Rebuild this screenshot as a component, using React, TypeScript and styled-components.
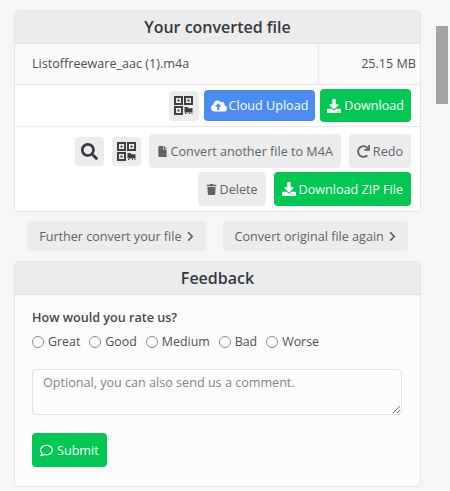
import React from 'react';
import styled, { createGlobalStyle } from 'styled-components';
import {
  FaCloudUploadAlt,
  FaDownload,
  FaSearch,
  FaFile,
  FaRedo,
  FaTrash,
  FaChevronRight,
  FaRegComment,
} from 'react-icons/fa';

const GlobalStyle = createGlobalStyle`
  html, body {
    margin: 0;
    height: 491px;
    overflow: hidden;
    background: #f6f6f6;
  }
  * {
    box-sizing: border-box;
  }
`;

const Page = styled.div`
  width: 435px;
  padding: 10px 14px 0;
  font-family: 'Open Sans', 'Noto Sans', sans-serif;
  font-size: 12.6px;
  color: #495057;
`;

const Card = styled.section`
  background: #fcfcfc;
  border: 1px solid #e4e6e6;
  border-radius: 4px;
  overflow: hidden;
`;

const CardHeader = styled.h2`
  margin: 0;
  height: 33px;
  line-height: 32px;
  text-align: center;
  font-size: 16px;
  font-weight: 600;
  color: #343a40;
  background: #ececec;
  border-bottom: 1px solid #e0e3e3;
`;

const FileRow = styled.div`
  display: grid;
  grid-template-columns: 304px 1fr;
  height: 41px;
  background: #fafafa;
  border-bottom: 1px solid #e8e8e8;
`;

const FileName = styled.div`
  padding-left: 17px;
  line-height: 40px;
  border-right: 1px solid #e8e8e8;
`;

const FileSize = styled.div`
  padding-right: 4px;
  line-height: 40px;
  text-align: right;
`;

const ActionRow = styled.div`
  display: flex;
  justify-content: flex-end;
  align-items: center;
  gap: 5px;
  height: 41px;
  padding: 0 9px 0 0;
  background: #fff;
`;

const ToolRow = styled.div`
  display: flex;
  flex-wrap: wrap;
  justify-content: flex-end;
  align-items: center;
  align-content: flex-start;
  gap: 4px 8px;
  height: 85px;
  padding: 7px 9px 0 0;
  background: #fff;
  border-top: 1px solid #e8e8e8;
`;

const Button = styled.button<{ $kind?: 'grey' | 'blue' | 'green'; $height?: number }>`
  display: inline-flex;
  align-items: center;
  justify-content: center;
  gap: ${(p) => (p.$kind === 'blue' ? 2 : 3)}px;
  height: ${(p) => p.$height ?? 34}px;
  padding: 0 7px;
  border: 0;
  border-radius: 4px;
  font: inherit;
  white-space: nowrap;
  color: ${(p) => (p.$kind === 'blue' || p.$kind === 'green' ? '#fff' : '#5f6468')};
  background: ${(p) =>
    p.$kind === 'blue' ? '#4a8cf0' : p.$kind === 'green' ? '#00c853' : '#ececec'};
`;

const ToolButton = styled(Button)`
  padding: 0 8px;
`;

const IconButton = styled(Button)<{ $size: number }>`
  width: ${(p) => p.$size}px;
  height: ${(p) => p.$size}px;
  padding: 0;
  color: #343a40;
`;

const MoreRow = styled.div`
  display: flex;
  justify-content: center;
  gap: 17px;
  margin: 9px 0 10px;
`;

const MoreButton = styled(Button)`
  height: 30px;
  padding: 0 10px 0 12px;
  gap: 3px;
  background: #ececec;
`;

const FeedbackBody = styled.form`
  height: 191px;
  padding: 13px 18px 0 17px;
`;

const Question = styled.div`
  font-weight: 600;
  line-height: 20px;
  color: #44494e;
`;

const RatingRow = styled.div`
  display: flex;
  gap: 9px;
  margin-top: 4px;
  line-height: 20px;
  font-size: 12.4px;
`;

const Rating = styled.label`
  display: inline-flex;
  align-items: center;
  gap: 4px;
`;

const RadioMark = styled.span`
  width: 12px;
  height: 12px;
  border: 1px solid #8a8f8c;
  border-radius: 50%;
  background: #fff;
`;

const Comment = styled.textarea`
  display: block;
  width: 370px;
  height: 46px;
  margin-top: 17px;
  padding: 4px 10px;
  border: 1px solid #dfe3e6;
  border-radius: 4px;
  background: #fcfcfc;
  font: inherit;
  resize: vertical;
  &::placeholder {
    color: #7d858c;
    opacity: 1;
  }
`;

const SubmitButton = styled(Button)`
  margin-top: 18px;
  padding: 0 8px;
  gap: 4px;
`;

const ScrollThumb = styled.div`
  position: absolute;
  top: 26px;
  left: 436px;
  width: 12px;
  height: 78px;
  background: #a3a3a3;
`;

function QrIcon() {
  return (
    <svg width="19" height="19" viewBox="0 0 19 19" fill="none" stroke="#3c4043" strokeWidth="2">
      <rect x="1" y="1" width="7" height="7" />
      <rect x="11" y="1" width="7" height="7" />
      <rect x="1" y="11" width="7" height="7" />
      <rect x="3.5" y="3.5" width="2" height="2" fill="#3c4043" stroke="none" />
      <rect x="13.5" y="3.5" width="2" height="2" fill="#3c4043" stroke="none" />
      <rect x="3.5" y="13.5" width="2" height="2" fill="#3c4043" stroke="none" />
      <path d="M10.5 11h3l1 1.2h4v4.3h-8z" fill="#3c4043" stroke="none" />
      <path d="M11 17.5h1.5M15 17.5h1M17.5 17.5h1" strokeWidth="1" />
    </svg>
  );
}

const ratings = ['Great', 'Good', 'Medium', 'Bad', 'Worse'];

export default function App() {
  return (
    <>
      <GlobalStyle />
      <Page>
        <Card>
          <CardHeader>Your converted file</CardHeader>
          <FileRow>
            <FileName>Listoffreeware_aac (1).m4a</FileName>
            <FileSize>25.15 MB</FileSize>
          </FileRow>
          <ActionRow>
            <IconButton type="button" $size={30}>
              <QrIcon />
            </IconButton>
            <Button type="button" $kind="blue" $height={31}>
              <FaCloudUploadAlt size={16} /> Cloud Upload
            </Button>
            <Button type="button" $kind="green" $height={33}>
              <FaDownload size={14} /> Download
            </Button>
          </ActionRow>
          <ToolRow>
            <IconButton type="button" $size={29}>
              <FaSearch size={17} />
            </IconButton>
            <IconButton type="button" $size={29}>
              <QrIcon />
            </IconButton>
            <ToolButton type="button">
              <FaFile size={11} /> Convert another file to M4A
            </ToolButton>
            <ToolButton type="button">
              <FaRedo size={13} /> Redo
            </ToolButton>
            <ToolButton type="button">
              <FaTrash size={11} /> Delete
            </ToolButton>
            <ToolButton type="button" $kind="green">
              <FaDownload size={14} /> Download ZIP File
            </ToolButton>
          </ToolRow>
        </Card>
        <MoreRow>
          <MoreButton type="button">
            Further convert your file <FaChevronRight size={11} />
          </MoreButton>
          <MoreButton type="button">
            Convert original file again <FaChevronRight size={11} />
          </MoreButton>
        </MoreRow>
        <Card>
          <CardHeader>Feedback</CardHeader>
          <FeedbackBody>
            <Question>How would you rate us?</Question>
            <RatingRow>
              {ratings.map((rating) => (
                <Rating key={rating}>
                  <RadioMark />
                  {rating}
                </Rating>
              ))}
            </RatingRow>
            <Comment placeholder="Optional, you can also send us a comment." />
            <SubmitButton type="button" $kind="green">
              <FaRegComment size={13} /> Submit
            </SubmitButton>
          </FeedbackBody>
        </Card>
      </Page>
      <ScrollThumb />
    </>
  );
}
